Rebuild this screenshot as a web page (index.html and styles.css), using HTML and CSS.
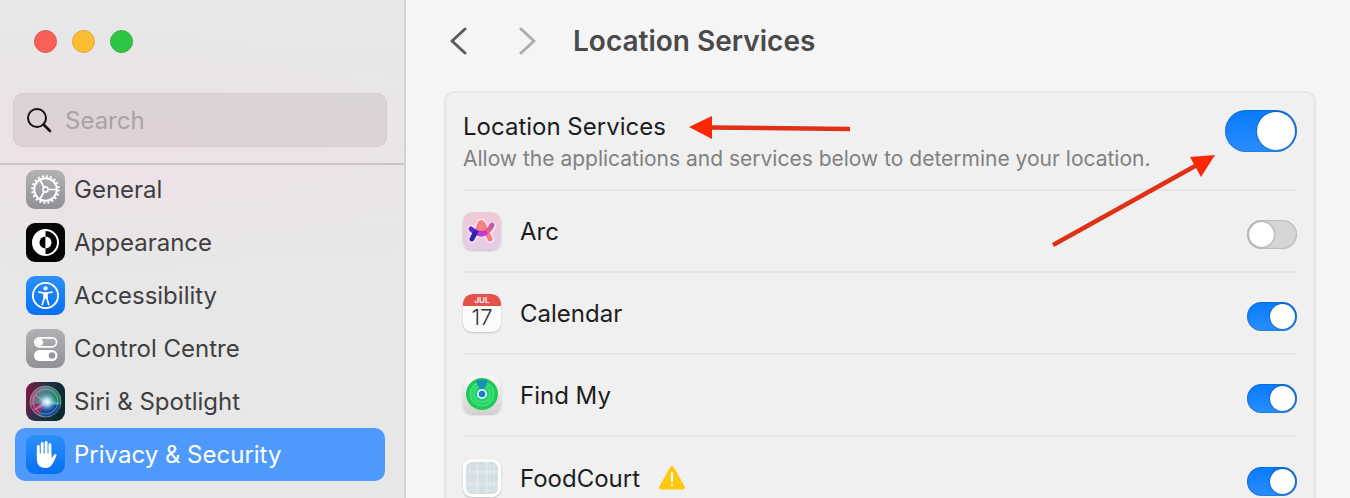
FILE: index.html
```
<!DOCTYPE html>
<html lang="en">
<head>
  <meta charset="utf-8">
  <title>Location Services</title>
  <link rel="stylesheet" href="styles.css">
</head>
<body>
  <div class="window">
    <aside class="sidebar">
      <div class="sidebar-top">
        <div class="lights">
          <button type="button" class="light red" aria-label="Close"></button>
          <button type="button" class="light yellow" aria-label="Minimise"></button>
          <button type="button" class="light green" aria-label="Zoom"></button>
        </div>
        <label class="search">
          <svg width="26" height="26" viewBox="0 0 26 26" fill="none" stroke="#111" stroke-width="2" stroke-linecap="round" aria-hidden="true"><circle cx="11" cy="11" r="9"/><path d="M17.500 17.500L24 24" stroke-width="2.600"/></svg>
          <input type="text" placeholder="Search" aria-label="Search">
        </label>
      </div>
      <nav class="menu">
        <a href="#general">
          <svg class="icon" viewBox="0 0 39 39" aria-hidden="true">
            <defs><linearGradient id="grey" x2="0" y2="1"><stop stop-color="#b2b1b4"/><stop offset="1" stop-color="#919095"/></linearGradient></defs>
            <rect width="39" height="39" rx="9" fill="url(#grey)"/>
            <g fill="none" stroke="#fff">
              <circle cx="19.500" cy="19.500" r="13.200" stroke-width="2.200" stroke-dasharray="2 2.147"/>
              <circle cx="19.500" cy="19.500" r="11.300" stroke-width="1.900"/>
              <circle cx="19.500" cy="19.500" r="2.600" stroke-width="1.600"/>
              <path d="M22 19.500H31M18.200 17.300L13.800 9.700M18.200 21.700L13.800 29.300" stroke-width="1.700"/>
            </g>
          </svg>
          <span>General</span>
        </a>
        <a href="#appearance">
          <svg class="icon" viewBox="0 0 39 39" aria-hidden="true">
            <rect width="39" height="39" rx="9" fill="#050505"/>
            <circle cx="19.500" cy="19.500" r="12.500" fill="none" stroke="#fff" stroke-width="2"/>
            <path d="M19.500 7a12.500 12.500 0 0 0 0 25z" fill="#fff"/>
            <path d="M19.500 13.500a6 6 0 0 0 0 12z" fill="#050505"/>
            <path d="M19.500 13.500a6 6 0 0 1 0 12z" fill="#fff"/>
          </svg>
          <span>Appearance</span>
        </a>
        <a href="#accessibility">
          <svg class="icon" viewBox="0 0 39 39" aria-hidden="true">
            <defs><linearGradient id="blue" x2="0" y2="1"><stop stop-color="#2c90f8"/><stop offset="1" stop-color="#0670f4"/></linearGradient></defs>
            <rect width="39" height="39" rx="9" fill="url(#blue)"/>
            <circle cx="19.500" cy="19.500" r="12.600" fill="none" stroke="#fff" stroke-width="1.900"/>
            <circle cx="19.500" cy="12.300" r="2.100" fill="#fff"/>
            <path d="M13 16.200L18 17h3l5-.8M18.300 17v5l-2 6.500M20.700 17v5l2 6.500" fill="none" stroke="#fff" stroke-width="1.700" stroke-linecap="round" stroke-linejoin="round"/>
            <path d="M17.500 16.500h4l.2 6h-4.400z" fill="#fff"/>
          </svg>
          <span>Accessibility</span>
        </a>
        <a href="#control-centre">
          <svg class="icon" viewBox="0 0 39 39" aria-hidden="true">
            <rect width="39" height="39" rx="9" fill="url(#grey)"/>
            <rect x="8.800" y="8.800" width="21.800" height="9" rx="4.500" fill="none" stroke="#fff" stroke-width="1.700"/>
            <circle cx="13.500" cy="13.300" r="3.600" fill="#fff"/>
            <rect x="8" y="21" width="23.500" height="11" rx="5.500" fill="#fff"/>
            <circle cx="26" cy="26.500" r="3.300" fill="#98979b"/>
          </svg>
          <span>Control Centre</span>
        </a>
        <a href="#siri">
          <svg class="icon" viewBox="0 0 39 39" aria-hidden="true">
            <defs>
              <linearGradient id="siriBack" x2="1" y2=".3"><stop stop-color="#8d1440"/><stop offset=".5" stop-color="#20344a"/><stop offset="1" stop-color="#082c2c"/></linearGradient>
              <linearGradient id="siriBall" x2="1" y2=".3"><stop stop-color="#d03568"/><stop offset=".4" stop-color="#5c7f8c"/><stop offset="1" stop-color="#128a63"/></linearGradient>
              <radialGradient id="siriGlow"><stop stop-color="#fff"/><stop offset=".35" stop-color="#d4f3ff" stop-opacity=".8"/><stop offset="1" stop-color="#56b9df" stop-opacity="0"/></radialGradient>
            </defs>
            <rect width="39" height="39" rx="9" fill="url(#siriBack)"/>
            <circle cx="19.500" cy="19.500" r="15.500" fill="url(#siriBall)" stroke="#b98aa5" stroke-width=".8"/>
            <path d="M20 20L34.500 23Q31 34.500 19 34.500Q13 33 12 28z" fill="#164a98"/>
            <path d="M5 23L20 20L13 32.500Q7 30 5 23z" fill="#a0266a"/>
            <path d="M8 13Q15 14 20 20Q29 18 34 22Q27 24 20 21Q15 27 7 28Q14 23 17 20Q14 16 8 13" fill="#9ad2d8" opacity=".5"/>
            <circle cx="19.500" cy="19.500" r="12.500" fill="none" stroke="#cfe3ea" stroke-width=".8" opacity=".5"/>
            <circle cx="21" cy="20" r="9.500" fill="url(#siriGlow)"/>
          </svg>
          <span>Siri &amp; Spotlight</span>
        </a>
        <a href="#privacy" class="selected" aria-current="page">
          <svg class="icon" viewBox="0 0 39 39" aria-hidden="true">
            <rect width="39" height="39" rx="9" fill="url(#blue)"/>
            <path d="M12.300 11.500V21M16.200 8.500V20M20.100 7.500V20M23.900 9.800V22" stroke="#fff" stroke-width="2.900" stroke-linecap="round"/>
            <path d="M10.850 18.500H25.400V23.500L28 19.800Q29.200 18.400 30.300 19.400Q30.800 20 30.200 21.500L27 28Q24.500 33 19.500 33Q11.500 33 10.850 25z" fill="#fff"/>
          </svg>
          <span>Privacy &amp; Security</span>
        </a>
      </nav>
    </aside>

    <main class="content">
      <header class="toolbar">
        <button type="button" aria-label="Back"><svg width="18" height="28" viewBox="0 0 18 28"><path d="M16 2L3 14L16 26" stroke="#5b5b5b"/></svg></button>
        <button type="button" aria-label="Forward"><svg width="18" height="28" viewBox="0 0 18 28"><path d="M2 2L15 14L2 26" stroke="#adadad"/></svg></button>
        <h1>Location Services</h1>
      </header>

      <section class="panel">
        <div class="row master">
          <div class="text">
            <label for="location">Location Services</label>
            <p>Allow the applications and services below to determine your location.</p>
          </div>
          <input type="checkbox" class="switch large" id="location" checked>
          <svg class="arrow-left" width="164" height="26" viewBox="0 0 164 26" aria-hidden="true"><path d="M22 12.500L162 14" stroke="#e03117" stroke-width="4.500"/><path d="M1 12L24 1V24z" fill="#fb2807"/></svg>
          <svg class="arrow-up" width="166" height="94" viewBox="0 0 166 94" aria-hidden="true"><path d="M2 91L146 11" stroke="#e03117" stroke-width="4.500"/><path d="M164 1L139 3L150 23z" fill="#fb2807"/></svg>
        </div>
        <div class="row">
          <svg class="app-icon" viewBox="0 0 38 38" aria-hidden="true">
            <defs>
              <linearGradient id="arcBack" x2="0" y2="1"><stop stop-color="#f2c9d5"/><stop offset="1" stop-color="#e3cce6"/></linearGradient>
              <linearGradient id="arcRight" gradientUnits="userSpaceOnUse" x1="0" y1="12" x2="0" y2="22"><stop stop-color="#b958b6"/><stop offset="1" stop-color="#ff6474"/></linearGradient>
            </defs>
            <rect width="38" height="38" rx="9" fill="url(#arcBack)"/>
            <g fill="none" stroke-linecap="round" stroke-linejoin="round">
              <path d="M8 17Q12 22 19 22Q26 21 29 14M9 27L17 12Q18 9 20 12L27 27" stroke="#fbe7f1" stroke-width="8"/>
              <path d="M14 19L17 12Q18 9 20 12L27 27" stroke="#f57c86" stroke-width="5"/>
              <path d="M18 12V18" stroke="#f9828a" stroke-width="5"/>
              <path d="M20 21Q26 20 29 13" stroke="url(#arcRight)" stroke-width="5"/>
              <path d="M8 17Q12 21 19 22" stroke="#5b28dc" stroke-width="5"/>
              <path d="M9 27L12 21" stroke="#2d22b4" stroke-width="5"/>
              <path d="M17 22Q20 22 22 21" stroke="#c33bd2" stroke-width="5"/>
            </g>
          </svg>
          <label for="arc">Arc</label>
          <input type="checkbox" class="switch" id="arc">
        </div>
        <div class="row">
          <svg class="app-icon" viewBox="0 0 38 38" aria-hidden="true">
            <rect width="38" height="38" rx="9" fill="#fbfbfa"/>
            <path d="M0 12V9a9 9 0 0 1 9-9h20a9 9 0 0 1 9 9v3z" fill="#e5524c"/>
            <text x="19" y="9" class="month">JUL</text>
            <text x="19" y="31" class="day">17</text>
          </svg>
          <label for="calendar">Calendar</label>
          <input type="checkbox" class="switch" id="calendar" checked>
        </div>
        <div class="row">
          <svg class="app-icon" viewBox="0 0 38 38" aria-hidden="true">
            <defs><linearGradient id="findBack" x2="0" y2="1"><stop stop-color="#fafafa"/><stop offset="1" stop-color="#d1d1cf"/></linearGradient></defs>
            <rect width="38" height="38" rx="9" fill="url(#findBack)"/>
            <circle cx="19" cy="18" r="16" fill="#1fc95c"/>
            <circle cx="19" cy="18" r="12" fill="#28db67" stroke="#58e58b"/>
            <circle cx="19" cy="18" r="8" fill="#26cc68" stroke="#52e592"/>
            <path d="M19 18L13 5Q19 2 25 5z" fill="#1690b5"/>
            <circle cx="19" cy="18" r="4.200" fill="#147ed0" stroke="#dff9ff" stroke-width="1.800"/>
          </svg>
          <label for="findmy">Find My</label>
          <input type="checkbox" class="switch" id="findmy" checked>
        </div>
        <div class="row">
          <svg class="app-icon" viewBox="0 0 38 38" aria-hidden="true">
            <rect width="38" height="38" rx="9" fill="#fff"/>
            <rect x="3" y="3" width="32" height="32" rx="6" fill="#d0dde2"/>
            <path d="M7 4V34M11 3V35M15 3V35M23 3V35M27 3V35M31 4V34M4 7H34M3 11H35M3 15H35M3 23H35M3 27H35M4 31H34" stroke="#dce6e9" stroke-width="1"/>
            <path d="M14 3V35M24 3V35M3 13H35M3 25H35" stroke="#e8eff1" stroke-width="1"/>
          </svg>
          <label for="foodcourt">FoodCourt</label>
          <svg class="warning" width="28" height="26" viewBox="0 0 28 26" aria-hidden="true"><path d="M14 3L25 22.500H3z" fill="#fdc80f" stroke="#fdc80f" stroke-width="4" stroke-linejoin="round"/><path d="M14 8V16M14 19.500V20" stroke="#fff" stroke-width="2.200" stroke-linecap="round"/></svg>
          <input type="checkbox" class="switch" id="foodcourt" checked>
        </div>
      </section>
    </main>
  </div>
</body>
</html>
```
FILE: styles.css
```
* {box-sizing: border-box;}

body {margin: 0;
      font-family: Inter, "Liberation Sans", sans-serif;
      font-size: 24px;
      line-height: 32px;
      color: #1d1d1d;}

button {padding: 0;
        border: none;
        background: none;}

svg {display: block;
     flex: none;}

.window {display: flex;
         height: 100vh;
         overflow: hidden;
         background-color: #f5f5f5;}

/* sidebar */
.sidebar {flex: none;
          width: 406px;
          border-right: solid #d3d1d3 2px;
          background: radial-gradient(ellipse 330px 120px at 90px 150px, #eee0e6, transparent),
                      radial-gradient(ellipse 420px 100px at 330px 150px, #ebe4e8, transparent),
                      #e7e7e7;}

.sidebar-top {height: 165px;
              padding: 30px 17px 0 13px;
              border-bottom: solid #cbc5c9 2px;}

.lights {display: flex;
         gap: 15px;
         padding-left: 21px;}

.light {width: 23px;
        height: 23px;
        border-radius: 50%;
        border: solid 1px;}

.red {background-color: #fb6058;
      border-color: #df5550;}

.yellow {background-color: #fcbd33;
         border-color: #dfa63a;}

.green {background-color: #2ec544;
        border-color: #35ae43;}

.search {display: flex;
         align-items: center;
         gap: 13px;
         height: 54px;
         margin-top: 40px;
         padding: 0 12px;
         background-color: rgba(90, 65, 80, .1);
         border: solid rgba(90, 70, 80, .06) 1px;
         border-radius: 10px;}

.search input {flex: 1;
               min-width: 0;
               padding: 2px 0 0;
               border: none;
               outline: none;
               background: none;
               font: inherit;}

.search input::placeholder {color: #a9a2a6;}

/* the list tucks up under the divider */
.menu {margin-top: -2px;
       padding: 0 19px 0 15px;}

.menu a {display: flex;
         align-items: center;
         gap: 9px;
         height: 53px;
         padding: 0 11px;
         border-radius: 10px;
         color: #403e40;
         text-decoration: none;}

.menu .selected {background-color: #4f99fd;
                 color: #ffffff;}

.icon {width: 39px;
       height: 39px;}

/* main pane */
.content {flex: 1;
          min-width: 0;
          padding: 0 34px 0 38px;}

.toolbar {display: flex;
          align-items: center;
          height: 91px;
          padding: 0 5px 9px;}

.toolbar button {margin-right: 52px;}

.toolbar button + button {margin-right: 36px;}

.toolbar path {fill: none;
               stroke-width: 3px;
               stroke-linecap: round;
               stroke-linejoin: round;}

h1 {margin: 0;
    font-size: 28px;
    font-weight: 600;
    color: #4a4a4a;}

.panel {padding: 0 17px;
        background-color: #f0f0f0;
        border: solid #e7e7e7 2px;
        border-radius: 10px;}

.row {display: flex;
      align-items: center;
      height: 82px;
      border-bottom: solid #e5e5e5 2px;}

.row:last-child {border-bottom: none;}

.master {position: relative;
         align-items: flex-start;
         height: 98px;
         padding-top: 17px;}

.text {padding-top: 1px;}

.master p {margin: 0;
           font-size: 21px;
           color: #808080;}

.app-icon {width: 38px;
           height: 38px;
           margin-right: 19px;
           border-radius: 9px;
           box-shadow: 0 1px 2px rgba(0, 0, 0, .2);}

.app-icon + label {padding-top: 2px;}

.month {font-size: 8px;
        font-weight: 600;
        fill: #ffffff;
        text-anchor: middle;}

.day {font-size: 22px;
      font-weight: 300;
      fill: #333333;
      text-anchor: middle;}

.warning {margin-left: 18px;}

.switch {appearance: none;
         flex: none;
         width: 50px;
         height: 29px;
         margin: 7px 0 0 auto;
         padding: 2px;
         border-radius: 21px;
         background-color: #d6d6d6;
         box-shadow: inset 0 0 2px rgba(0, 0, 0, .4);}

.switch::before {content: "";
                 display: block;
                 width: 25px;
                 height: 25px;
                 border-radius: 50%;
                 background-color: #ffffff;
                 box-shadow: 0 0 2px rgba(0, 0, 0, .5);}

.switch:checked {background: linear-gradient(#077bfb, #2b8dfd);}

.switch:checked::before {margin-left: auto;}

.large {width: 72px;
        height: 42px;
        margin-top: 0;}

.large::before {width: 38px;
                height: 38px;}

/* red pointers drawn over the first row */
.arrow-left {position: absolute;
             left: 225px;
             top: 22px;}

.arrow-up {position: absolute;
           right: 80px;
           top: 61px;}
```
